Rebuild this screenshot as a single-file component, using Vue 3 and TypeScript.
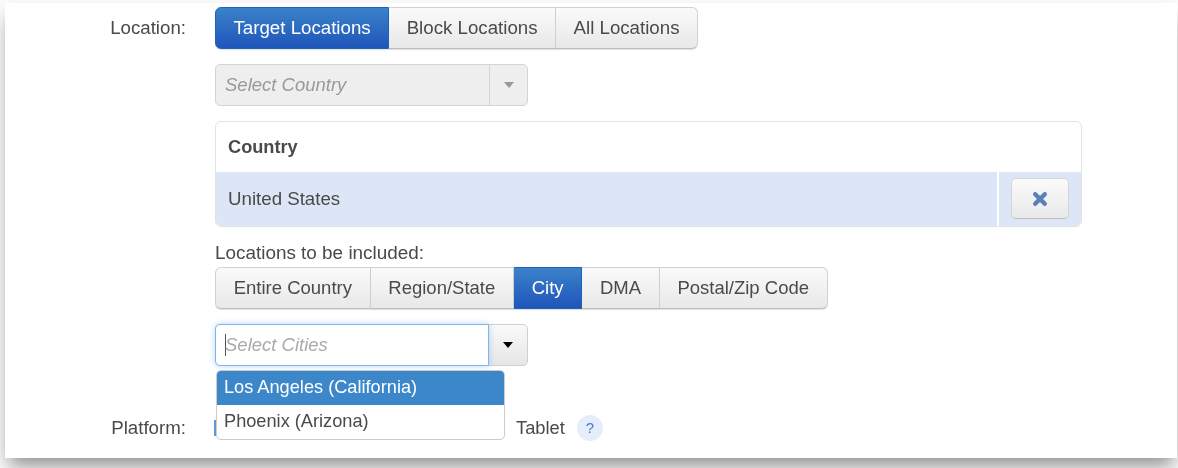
<script setup lang="ts">
const targets = [
  { label: 'Target Locations', active: true },
  { label: 'Block Locations', active: false },
  { label: 'All Locations', active: false },
]
const scopes = [
  { label: 'Entire Country', active: false },
  { label: 'Region/State', active: false },
  { label: 'City', active: true },
  { label: 'DMA', active: false },
  { label: 'Postal/Zip Code', active: false },
]
</script>

<template>
  <div class="page">
    <div class="panel">
      <div class="row location">
        <div class="label">Location:</div>
        <div class="body">
          <div class="group">
            <button v-for="t in targets" :key="t.label" class="btn" :class="{ active: t.active }">{{ t.label }}</button>
          </div>

          <div class="select disabled">
            <div class="field">Select Country</div>
            <div class="arrow"><i class="caret"></i></div>
          </div>

          <div class="table">
            <div class="thead">Country</div>
            <div class="tr">
              <div class="td">United States</div>
              <div class="action">
                <button class="remove" aria-label="Remove">
                  <svg width="16" height="16" viewBox="0 0 16 16">
                    <path d="M3.2 3.2 12.8 12.8M12.8 3.2 3.2 12.8" stroke="#5b7fb9" stroke-width="4.4" stroke-linecap="round" fill="none" />
                  </svg>
                </button>
              </div>
            </div>
          </div>

          <div class="included">Locations to be included:</div>
          <div class="group scopes">
            <button v-for="s in scopes" :key="s.label" class="btn" :class="{ active: s.active }">{{ s.label }}</button>
          </div>

          <div class="combo">
            <div class="select open">
              <div class="field"><span class="cursor"></span>Select Cities</div>
              <div class="arrow"><i class="caret"></i></div>
            </div>
            <ul class="menu">
              <li class="on">Los Angeles (California)</li>
              <li>Phoenix (Arizona)</li>
            </ul>
          </div>
        </div>
      </div>

      <div class="row platform">
        <div class="label">Platform:</div>
        <div class="options">
          <span class="check"></span>
          <span class="tablet">Tablet</span>
          <span class="help">?</span>
        </div>
      </div>
    </div>
  </div>
</template>

<style>
html, body { margin: 0; background: #fafafa; overflow: hidden; }
</style>

<style scoped>
.page {
  width: 1178px;
  height: 468px;
  box-sizing: border-box;
  padding: 3px 1px 0 5px;
  overflow: hidden;
  font-family: "Liberation Sans", Arial, sans-serif;
  font-size: 18.7px;
  color: #4a4a4a;
}
.panel {
  height: 455px;
  background: #fff;
  box-shadow: 0 12px 18px -4px rgba(0, 0, 0, 0.42);
  filter: blur(0.4px);
}
.row { display: flex; }
.location { padding-top: 4px; }
.label {
  width: 181px;
  text-align: right;
  line-height: 42px;
  flex: none;
}
.body {
  margin-left: 29px;
  width: 867px;
}
.group { display: inline-flex; vertical-align: top; }
.btn {
  height: 42px;
  padding: 0 17.5px;
  font: inherit;
  color: #4a4a4a;
  background: linear-gradient(#fafafa, #e8e8e8);
  border: 1px solid #d2d2d2;
  border-bottom-color: #bdbdbd;
  border-left-width: 0;
  box-shadow: 0 1px 1px rgba(0, 0, 0, 0.12);
  white-space: nowrap;
}
.btn:first-child { border-left-width: 1px; border-radius: 6px 0 0 6px; }
.btn:last-child { border-radius: 0 6px 6px 0; }
.btn.active {
  color: #fff;
  background: linear-gradient(#3a82c9, #1f55bb);
  border-color: #2560b8;
}
.scopes { font-size: 18.5px; }
.scopes .btn { padding: 0 17.7px; }
.select {
  display: flex;
  width: 313px;
  height: 42px;
  box-sizing: border-box;
  margin-top: 15px;
  border: 1px solid #d4d4d4;
  border-radius: 5px;
}
.field {
  flex: 1;
  display: flex;
  align-items: center;
  padding-left: 9px;
  font-style: italic;
  color: #999;
  font-size: 18.5px;
}
.arrow {
  width: 37px;
  display: flex;
  align-items: center;
  justify-content: center;
  border-left: 1px solid #d4d4d4;
}
.caret {
  display: block;
  border: 5.5px solid transparent;
  border-bottom-width: 0;
  border-top: 6px solid #999;
}
.disabled { background: #eee; }
.table {
  height: 106px;
  box-sizing: border-box;
  margin-top: 15px;
  border: 1px solid #e3e3e3;
  border-radius: 6px;
  overflow: hidden;
}
.thead {
  height: 50px;
  line-height: 50px;
  padding-left: 12px;
  font-weight: 700;
  font-size: 18.2px;
}
.tr {
  display: flex;
  height: 54px;
  background: #dde6f7;
}
.td {
  flex: 1;
  line-height: 53px;
  padding-left: 12px;
}
.action {
  width: 84px;
  box-sizing: border-box;
  border-left: 2px solid #fff;
  padding: 6px 0 0 12px;
}
.remove {
  display: flex;
  align-items: center;
  justify-content: center;
  width: 58px;
  height: 41px;
  padding: 0;
  background: linear-gradient(#fafafa, #e9e9e9);
  border: 1px solid #d4d4d4;
  border-bottom-color: #bcbcbc;
  border-radius: 5px;
}
.included {
  line-height: 25px;
  padding-top: 13px;
  height: 27px;
  font-size: 18.9px;
}
.combo { position: relative; }
.open {
  background: linear-gradient(#fafafa, #e6e6e6);
  border-color: #d0d0d0;
}
.open .field {
  background: #fff;
  border: 1px solid #7db5ee;
  border-radius: 5px 0 0 5px;
  margin: -1px 0 -1px -1px;
  box-shadow: 0 0 6px rgba(90, 160, 235, 0.45);
  color: #aaa;
}
.open .arrow { width: 38px; border-left: 0; }
.open .caret { border-top-color: #000; }
.cursor {
  width: 1px;
  height: 22px;
  background: #555;
  margin-right: -1px;
}
.menu {
  position: absolute;
  left: 1px;
  top: 46px;
  width: 289px;
  box-sizing: border-box;
  margin: 0;
  padding: 0;
  list-style: none;
  background: #fff;
  border: 1px solid #ccc;
  border-radius: 5px;
  overflow: hidden;
  z-index: 2;
  font-size: 18.2px;
}
.menu li {
  height: 34px;
  line-height: 33px;
  padding-left: 7px;
}
.menu .on { height: 33.5px; background: #3c87c9; color: #fff; }
.platform { margin-top: 49px; line-height: 26px; }
.platform .label { line-height: 26px; }
.options {
  margin-left: 29px;
  display: flex;
  align-items: center;
  height: 26px;
}
.check {
  width: 2px;
  height: 16px;
  margin-left: -1px;
  background: #5c9ad6;
}
.tablet { margin-left: 300px; font-size: 18.3px; }
.help {
  width: 26px;
  height: 26px;
  margin-left: 12px;
  border-radius: 50%;
  background: #e6edfa;
  color: #4a78cc;
  font-size: 15px;
  line-height: 26px;
  text-align: center;
}
</style>
